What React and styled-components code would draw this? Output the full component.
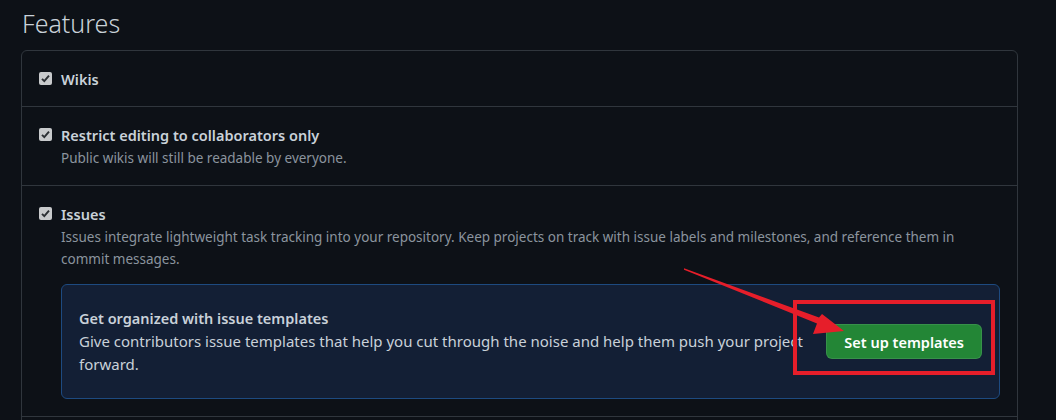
import React from 'react';
import styled, { createGlobalStyle } from 'styled-components';

const GlobalStyles = createGlobalStyle`
  html, body {
    margin: 0;
    padding: 0;
    background: #0d1117;
    overflow: hidden;
  }
  body {
    font-family: "Noto Sans", "Liberation Sans", sans-serif;
    color: #c9d1d9;
  }
`;

const Page = styled.div`
  position: relative;
  width: 1056px;
  height: 420px;
  padding: 5px 38px 0 21px;
  box-sizing: border-box;
  overflow: hidden;
`;

const Heading = styled.h2`
  margin: 0 0 9px 1px;
  font-size: 25px;
  font-weight: 300;
  line-height: 36px;
  color: #c9d1d9;
`;

const Box = styled.div`
  border: 1px solid #30363d;
  border-radius: 6px;
  height: 376px;
  box-sizing: border-box;
`;

const Row = styled.div`
  display: flex;
  gap: 9px;
  padding: 17px 17px ${(p) => p.$bottom || 15}px 17px;
  border-top: ${(p) => (p.$first ? 'none' : '1px solid #30363d')};
  border-bottom: ${(p) => (p.$last ? '1px solid #30363d' : 'none')};
`;

const CheckWrap = styled.span`
  flex: none;
  width: 13px;
  height: 13px;
  margin-top: 4px;
  display: flex;
`;

const Body = styled.div`
  flex: 1;
  min-width: 0;
`;

const Label = styled.div`
  font-size: 14.5px;
  font-weight: 600;
  line-height: 23px;
  color: #c9d1d9;
`;

const Note = styled.div`
  font-size: 13.5px;
  line-height: 22px;
  color: #8b949e;
`;

const Promo = styled.div`
  display: flex;
  align-items: center;
  gap: 16px;
  margin-top: 14px;
  padding: 22px 17px;
  background: #131f35;
  border: 1px solid #1d4a80;
  border-radius: 6px;
`;

const PromoText = styled.div`
  flex: 1;
  font-size: 15px;
  line-height: 23px;
  color: #c9d1d9;
`;

const PromoTitle = styled.div`
  font-size: 14.5px;
  font-weight: 600;
`;

const GreenButton = styled.button`
  flex: none;
  height: 35px;
  padding: 0 17px;
  background: #238636;
  color: #ffffff;
  border: 1px solid rgba(240, 246, 252, 0.1);
  border-radius: 6px;
  font-family: inherit;
  font-size: 14.5px;
  font-weight: 600;
`;

const Overlay = styled.svg`
  position: absolute;
  left: 0;
  top: 0;
  pointer-events: none;
`;

function Check() {
  return (
    <CheckWrap>
      <svg width="13" height="13" viewBox="0 0 13 13">
        <rect x="0" y="0" width="13" height="13" rx="2" fill="#c8cacc" />
        <path d="M3 6.8 L5.3 9.2 L10 3.6" fill="none" stroke="#2b2f33" strokeWidth="1.9" />
      </svg>
    </CheckWrap>
  );
}

export default function App() {
  return (
    <>
      <GlobalStyles />
      <Page>
        <Heading>Features</Heading>
        <Box>
          <Row $first>
            <Check />
            <Body>
              <Label>Wikis</Label>
            </Body>
          </Row>
          <Row $bottom={16}>
            <Check />
            <Body>
              <Label>Restrict editing to collaborators only</Label>
              <Note>Public wikis will still be readable by everyone.</Note>
            </Body>
          </Row>
          <Row $bottom={17} $last>
            <Check />
            <Body>
              <Label>Issues</Label>
              <Note>
                Issues integrate lightweight task tracking into your repository. Keep projects on track with issue
                labels and milestones, and reference them in commit messages.
              </Note>
              <Promo>
                <PromoText>
                  <PromoTitle>Get organized with issue templates</PromoTitle>
                  Give contributors issue templates that help you cut through the noise and help them push your project
                  forward.
                </PromoText>
                <GreenButton>Set up templates</GreenButton>
              </Promo>
            </Body>
          </Row>
        </Box>
        <Overlay width="1056" height="420" viewBox="0 0 1056 420">
          <rect x="795" y="302" width="198" height="71" fill="none" stroke="#e61e2a" strokeWidth="4" />
          <polygon
            points="684,268.3 819,317.5 822,314 844,331 813,334 817,323.5 684,269.7"
            fill="#e61e2a"
          />
        </Overlay>
      </Page>
    </>
  );
}
